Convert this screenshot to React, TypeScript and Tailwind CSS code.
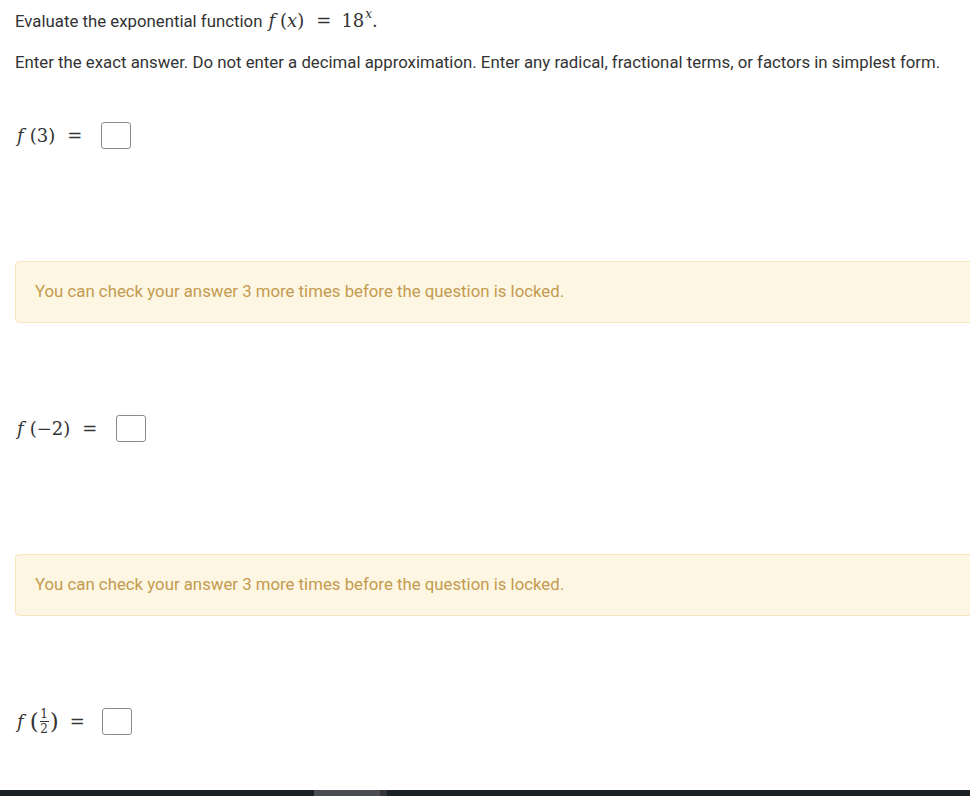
import React from "react";

const serif = { fontFamily: '"DejaVu Serif", "Liberation Serif", serif' };

function Box() {
  return <span className="inline-block w-[30px] h-[27px] border border-[#8c8c8c] rounded-[3px] bg-white align-middle" />;
}

function Alert() {
  return (
    <div className="ml-[15px] mr-[-10px] h-[62px] flex items-center pl-[19px] bg-[#fdf6e3] border border-[#f8e6bf] rounded-[4px] text-[16.8px] text-[#c49a4f]">
      You can check your answer 3 more times before the question is locked.
    </div>
  );
}

export default function App() {
  return (
    <div className="w-[970px] h-[796px] bg-white relative overflow-hidden flex flex-col" style={{ fontFamily: 'Roboto, "Liberation Sans", sans-serif' }}>
      <div className="pl-[15px] pt-[9px] text-[16.8px] leading-[24px] text-[#333333] flex items-center">
        <span>Evaluate the exponential function</span>
        <span style={serif} className="text-[18px] flex items-center ml-[6px]">
          <i className="mr-[5px]">f</i>
          <span>(</span>
          <i>x</i>
          <span>)</span>
          <span className="ml-[12px] mr-[10px]">=</span>
          <span>18</span>
          <i className="text-[12px] relative top-[-7px] ml-[1px]">x</i>
          <span>.</span>
        </span>
      </div>
      <div className="pl-[15px] mt-[17px] text-[16.8px] leading-[24px] text-[#333333]">
        Enter the exact answer. Do not enter a decimal approximation. Enter any radical, fractional terms, or factors in simplest form.
      </div>

      <div className="pl-[17px] mt-[47px] h-[28px] flex items-center text-[#333333]" style={serif}>
        <span className="text-[18px] flex items-center">
          <i className="mr-[6px]">f</i>
          <span>(3)</span>
          <span className="ml-[12px] mr-[19px]">=</span>
        </span>
        <Box />
      </div>

      <div className="mt-[112px]">
        <Alert />
      </div>

      <div className="pl-[17px] mt-[91px] h-[28px] flex items-center text-[#333333]" style={serif}>
        <span className="text-[18px] flex items-center">
          <i className="mr-[6px]">f</i>
          <span>(−2)</span>
          <span className="ml-[12px] mr-[19px]">=</span>
        </span>
        <Box />
      </div>

      <div className="mt-[112px]">
        <Alert />
      </div>

      <div className="pl-[17px] mt-[91px] h-[28px] flex items-center text-[#333333]" style={serif}>
        <span className="text-[18px] flex items-center">
          <i className="mr-[6px]">f</i>
          <span className="text-[23px] leading-none">(</span>
          <span className="inline-flex flex-col items-center text-[12px] leading-[12px] mx-[1px]">
            <span>1</span>
            <span className="block w-[9px] h-px bg-[#333333] my-[1px]" />
            <span>2</span>
          </span>
          <span className="text-[23px] leading-none">)</span>
          <span className="ml-[11px] mr-[17px]">=</span>
        </span>
        <Box />
      </div>

      <div className="absolute left-0 right-0 bottom-0 h-[6px] bg-[#1b2028] flex">
        <div className="ml-[314px] w-[66px] h-full bg-[#4a4d52]" />
        <div className="w-[7px] h-full bg-[#34363a]" />
      </div>
    </div>
  );
}
